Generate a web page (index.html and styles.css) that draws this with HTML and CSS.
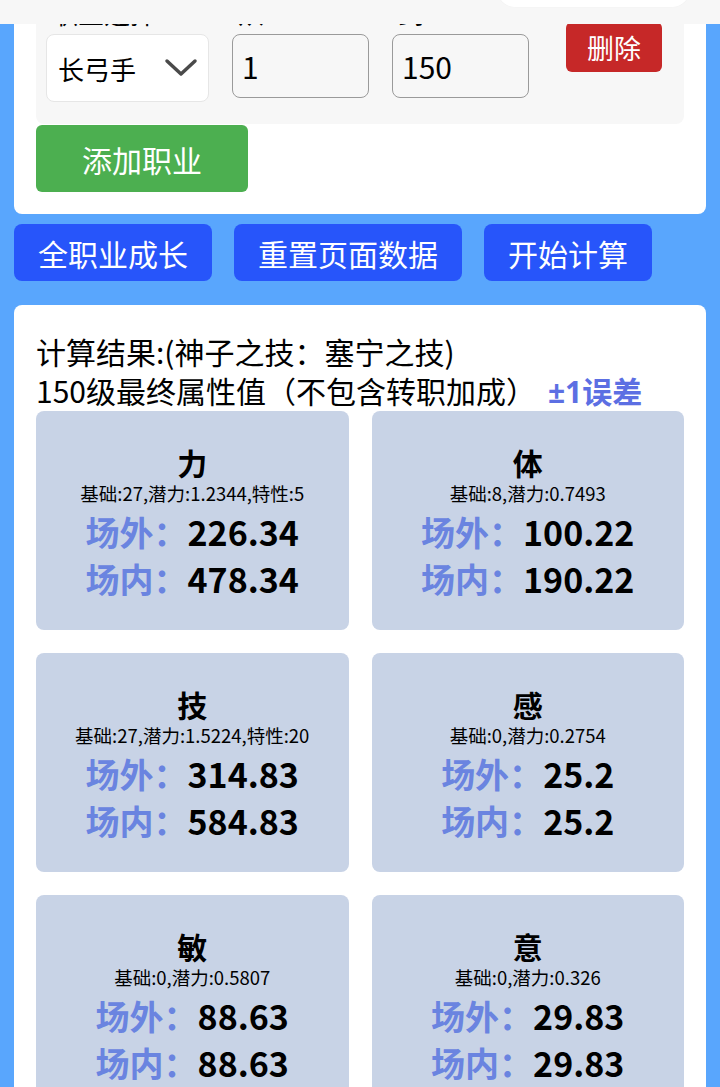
FILE: index.html
```html
<!DOCTYPE html>
<html lang="zh-CN">
<head>
<meta charset="utf-8">
<title>职业成长计算</title>
<link rel="stylesheet" href="styles.css">
</head>
<body>
<div class="topbar"><div class="pill"></div></div>
<main class="page">
  <section class="card setup">
    <div class="job-row">
      <div class="field">
        <div class="label">职业选择</div>
        <div class="select"><span>长弓手</span>
          <svg class="chev" width="34" height="20" viewBox="0 0 34 20"><path d="M3 3 L17 16 L31 3" fill="none" stroke="#4a4a4a" stroke-width="3.5" stroke-linecap="round" stroke-linejoin="round"/></svg>
        </div>
      </div>
      <div class="field">
        <div class="label">从</div>
        <div class="input">1</div>
      </div>
      <div class="field">
        <div class="label">到</div>
        <div class="input">150</div>
      </div>
      <button class="btn-del">删除</button>
    </div>
    <button class="btn-add">添加职业</button>
  </section>

  <div class="actions">
    <button class="btn-blue">全职业成长</button>
    <button class="btn-blue">重置页面数据</button>
    <button class="btn-blue">开始计算</button>
  </div>

  <section class="card results">
    <div class="res-line">计算结果:(神子之技：塞宁之技)</div>
    <div class="res-line">150级最终属性值（不包含转职加成）<b class="err"><span class="pm">±1</span>误差</b></div>
    <div class="grid">
      <div class="stat">
        <div class="st-title">力</div>
        <div class="st-sub">基础:27,潜力:1.2344,特性:5</div>
        <div class="st-val"><span class="lb">场外：</span>226.34</div>
        <div class="st-val"><span class="lb">场内：</span>478.34</div>
      </div>
      <div class="stat">
        <div class="st-title">体</div>
        <div class="st-sub">基础:8,潜力:0.7493</div>
        <div class="st-val"><span class="lb">场外：</span>100.22</div>
        <div class="st-val"><span class="lb">场内：</span>190.22</div>
      </div>
      <div class="stat">
        <div class="st-title">技</div>
        <div class="st-sub">基础:27,潜力:1.5224,特性:20</div>
        <div class="st-val"><span class="lb">场外：</span>314.83</div>
        <div class="st-val"><span class="lb">场内：</span>584.83</div>
      </div>
      <div class="stat">
        <div class="st-title">感</div>
        <div class="st-sub">基础:0,潜力:0.2754</div>
        <div class="st-val"><span class="lb">场外：</span>25.2</div>
        <div class="st-val"><span class="lb">场内：</span>25.2</div>
      </div>
      <div class="stat">
        <div class="st-title">敏</div>
        <div class="st-sub">基础:0,潜力:0.5807</div>
        <div class="st-val"><span class="lb">场外：</span>88.63</div>
        <div class="st-val"><span class="lb">场内：</span>88.63</div>
      </div>
      <div class="stat">
        <div class="st-title">意</div>
        <div class="st-sub">基础:0,潜力:0.326</div>
        <div class="st-val"><span class="lb">场外：</span>29.83</div>
        <div class="st-val"><span class="lb">场内：</span>29.83</div>
      </div>
    </div>
  </section>
</main>
</body>
</html>
```
FILE: styles.css
```css
* { box-sizing: border-box; }
html, body { margin: 0; padding: 0; }
body {
  background: #59a6fd;
  font-family: "Noto Sans CJK SC", "Noto Sans", sans-serif;
  color: #000;
  overflow: hidden;
}
.topbar {
  position: fixed;
  top: 0; left: 0; right: 0;
  height: 24px;
  background: #f7f7f7;
  z-index: 10;
}
.pill {
  position: absolute;
  left: 497px;
  width: 193px;
  top: -30px;
  height: 37px;
  background: #fff;
  border-radius: 18px;
  box-shadow: 0 0 1px rgba(0,0,0,0.08);
}
.page {
  margin-top: -34px;
  padding: 0 14px;
}
.card {
  background: #fff;
  border-radius: 8px;
}
.setup { padding: 22px 22px 22px; }
.job-row {
  background: #f7f7f7;
  border-radius: 8px;
  display: flex;
  align-items: flex-start;
  gap: 23px;
  padding: 10px 10px 22px;
}
.field { display: flex; flex-direction: column; }
.label {
  font-size: 26px;
  line-height: 30px;
  margin-bottom: 6px;
  padding-left: 6px;
}
.select {
  width: 163px;
  height: 68px;
  background: #fff;
  border: 1px solid #e6e6e6;
  border-radius: 8px;
  display: flex;
  align-items: center;
  justify-content: space-between;
  padding: 0 10px 0 11px;
  font-size: 26px;
}
.input {
  width: 137px;
  height: 64px;
  border: 1.5px solid #9a9a9a;
  border-radius: 8px;
  background: #f7f7f7;
  font-size: 30px;
  display: flex;
  align-items: center;
  padding-left: 9px;
}
.btn-del {
  margin-top: 24px;
  margin-left: 14px;
  height: 50px;
  padding: 0 21px;
  border: none;
  border-radius: 6px;
  background: #c62828;
  color: #fff;
  font-family: inherit;
  font-size: 27px;
  line-height: 1;
}
.btn-add {
  margin-top: 1px;
  width: 212px;
  height: 67px;
  border: none;
  border-radius: 6px;
  background: #4caf50;
  color: #fff;
  font-family: inherit;
  font-size: 30px;
  display: block;
}
.actions {
  display: flex;
  gap: 22px;
  margin-top: 10px;
}
.btn-blue {
  height: 57px;
  padding: 0 24px;
  border: none;
  border-radius: 8px;
  background: #2755fa;
  color: #fff;
  font-family: inherit;
  font-size: 30px;
}
.results {
  margin-top: 24px;
  padding: 27px 22px 0;
}
.res-line {
  font-size: 30px;
  line-height: 39px;
  white-space: nowrap;
}
.err {
  color: #5c6fe3;
  font-weight: 700;
  margin-left: 12px;
}
.pm { font-family: "Noto Sans", sans-serif; }
.grid {
  display: grid;
  grid-template-columns: 1fr 1fr;
  gap: 23px;
}
.stat {
  background: #c8d3e6;
  border-radius: 8px;
  height: 219px;
  padding-top: 34px;
  text-align: center;
}
.st-title { font-size: 30px; line-height: 34px; font-weight: 700; }
.st-sub { font-size: 18.5px; line-height: 29px; }
.st-val { font-size: 34px; line-height: 47px; font-weight: 700; }
.lb { color: #6a84e0; }
```
